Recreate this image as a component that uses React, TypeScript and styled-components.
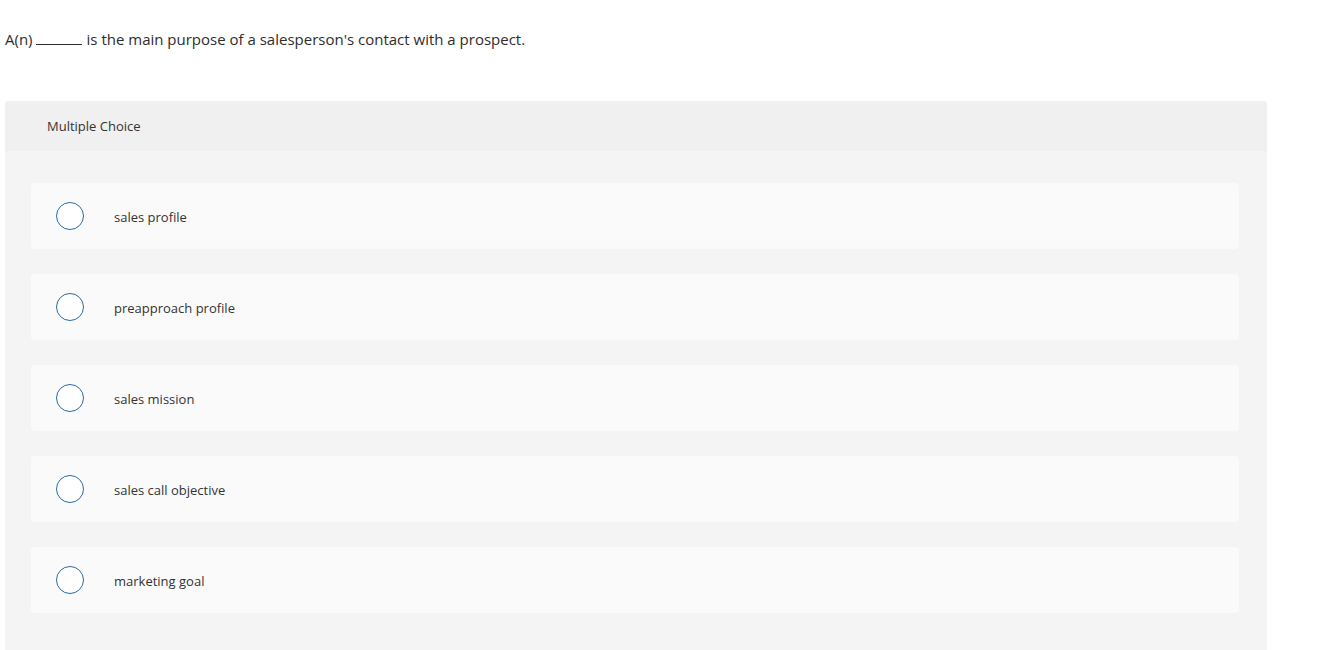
import styled, { createGlobalStyle } from 'styled-components';

const GlobalStyle = createGlobalStyle`
  body {
    margin: 0;
    background: #fff;
    font-family: "Open Sans", Lato, Arial, sans-serif;
    color: #333;
  }
`;

const Page = styled.div`
  padding: 29px 71px 0 5px;
`;

const Question = styled.p`
  margin: 0 0 52px;
  font-size: 15px;
  line-height: 20px;
  color: #2d2d2d;
`;

const Blank = styled.span`
  display: inline-block;
  width: 46px;
  height: 14px;
  border-bottom: 1px solid #2d2d2d;
  margin: 0 5px 0 3px;
  vertical-align: baseline;
`;

const Panel = styled.section`
  background: #f4f4f4;
  border-radius: 3px 3px 0 0;
  padding-bottom: 37px;
`;

const PanelHeader = styled.div`
  height: 50px;
  display: flex;
  align-items: center;
  padding-left: 42px;
  background: #f0f0f0;
  border-radius: 3px 3px 0 0;
  font-size: 13px;
  color: #333;
`;

const Options = styled.div`
  display: flex;
  flex-direction: column;
  gap: 25px;
  padding: 32px 28px 0 26px;
`;

const Option = styled.label`
  height: 66px;
  box-sizing: border-box;
  display: flex;
  align-items: center;
  background: #fafafa;
  border-radius: 4px;
  padding-left: 25px;
  font-size: 13px;
  color: #333;
  cursor: pointer;
`;

const Radio = styled.span`
  width: 26px;
  height: 26px;
  border-radius: 50%;
  border: 1.5px solid #2b6aa6;
  background: #fff;
  margin-right: 30px;
  flex-shrink: 0;
`;

const OptionText = styled.span`
  padding-top: 2px;
`;

const choices = [
  'sales profile',
  'preapproach profile',
  'sales mission',
  'sales call objective',
  'marketing goal',
];

const App = () => {
  return (
    <Page>
      <GlobalStyle />
      <Question>
        A(n)<Blank />is the main purpose of a salesperson's contact with a prospect.
      </Question>
      <Panel>
        <PanelHeader>Multiple Choice</PanelHeader>
        <Options>
          {choices.map(choice => (
            <Option key={choice}>
              <Radio />
              <OptionText>{choice}</OptionText>
            </Option>
          ))}
        </Options>
      </Panel>
    </Page>
  );
};

export default App;
